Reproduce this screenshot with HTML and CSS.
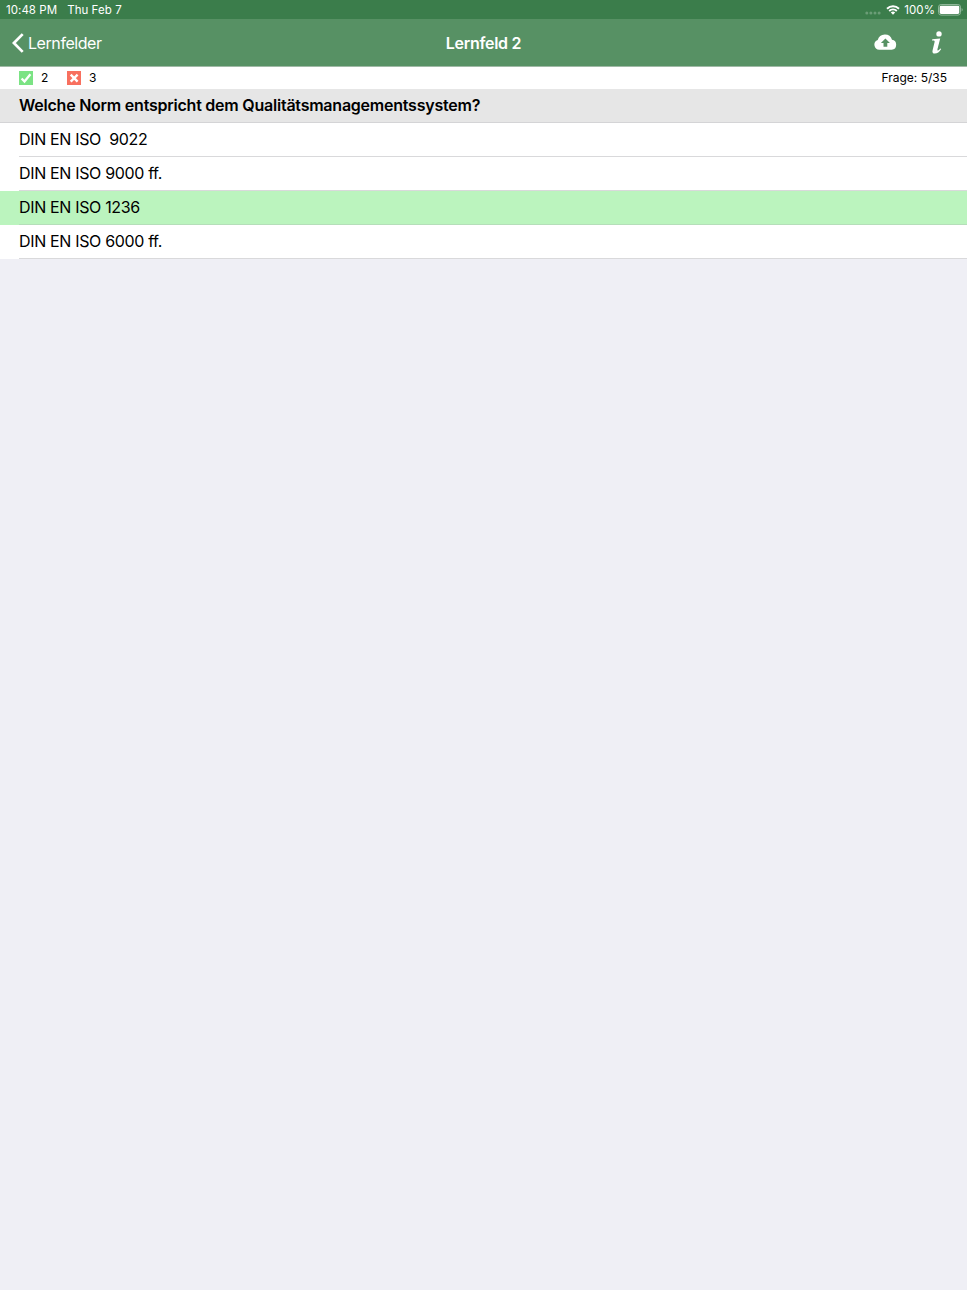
FILE: index.html
```html
<!DOCTYPE html>
<html lang="de">
<head>
    <meta charset="utf-8">
    <meta name="viewport" content="width=device-width, initial-scale=1">
    <title>Lernfeld 2</title>
    <link rel="stylesheet" href="styles.css">
</head>
<body>
    <div class="status-bar">
        <span class="time">10:48 PM</span>
        <span class="date">Thu Feb 7</span>
        <div class="status-icons">
            <svg class="signal" width="16" height="4" viewBox="0 0 16 4">
                <circle cx="1.8" cy="2" r="1.5"/>
                <circle cx="5.9" cy="2" r="1.5"/>
                <circle cx="10" cy="2" r="1.5"/>
                <circle cx="14.1" cy="2" r="1.5"/>
            </svg>
            <svg class="wifi" width="14" height="10" viewBox="0 0 14 10">
                <path d="M1 3.7a8.7 8.7 0 0 1 12 0M3.2 6a5.6 5.6 0 0 1 7.6 0" fill="none" stroke="#fff" stroke-width="1.9"/>
                <path d="M7 9.8 4.8 7.6a3.2 3.2 0 0 1 4.4 0z" fill="#fff"/>
            </svg>
            <span class="percent">100%</span>
            <svg class="battery" width="25" height="12" viewBox="0 0 25 12">
                <rect x=".5" y=".5" width="22" height="10.6" rx="2.6" fill="none" stroke="#8fb799"/>
                <rect x="1.7" y="1.7" width="19.6" height="8.2" rx="1.4" fill="#fff"/>
                <path d="M23.6 4v3.6q1.1-.5 1.1-1.8T23.6 4z" fill="#8fb799"/>
            </svg>
        </div>
    </div>

    <div class="nav-bar">
        <div class="back">
            <svg width="12" height="20" viewBox="0 0 12 20">
                <path d="M10.7 1.1 1.9 10l8.8 8.9" fill="none" stroke="#fff" stroke-width="2.7"/>
            </svg>
            <span>Lernfelder</span>
        </div>
        <h1 class="title">Lernfeld 2</h1>
        <div class="actions">
            <svg class="cloud" width="23" height="16" viewBox="0 0 23 16">
                <path fill="#fff" fill-rule="evenodd" d="M5.3 15.7A5 5 0 0 1 3.7 6 7.4 7.4 0 0 1 18 5.8a5 5 0 0 1-.3 9.9zM11.4 4.6 6.9 9.1h2.6v3.7h3.8V9.1h2.6z"/>
            </svg>
            <svg class="info" width="12" height="23" viewBox="0 0 12 23">
                <circle cx="8" cy="2.9" r="2.7" fill="#fff"/>
                <path fill="#fff" d="M1.3 8.2 9.2 7.6 6.5 18q-.4 1.6.4 1.6.9 0 2.4-2.1l.9.6Q7.500 22.600 3.800 22.600 .8 22.600 1.600 19.200L3.600 11.100Q4 9.500 2.900 9.500L1 9.500Z"/>
            </svg>
        </div>
    </div>

    <div class="score-bar">
        <svg width="14" height="14" viewBox="0 0 14 14">
            <rect width="14" height="14" fill="#7be384"/>
            <path d="m2.600 7.500 2.900 3L11.400 3.300" fill="none" stroke="#fff" stroke-width="2.300"/>
        </svg>
        <span class="count">2</span>
        <svg width="14" height="14" viewBox="0 0 14 14">
            <rect width="14" height="14" fill="#f8705f"/>
            <path d="m3.700 3.700 6.900 6.900M10.600 3.700l-6.900 6.900" fill="none" stroke="#fff" stroke-width="2.400"/>
        </svg>
        <span class="count">3</span>
        <span class="progress">Frage: 5/35</span>
    </div>

    <h2 class="question">Welche Norm entspricht dem Qualitätsmanagementssystem?</h2>
    <ul class="answers">
        <li><span>DIN EN ISO&nbsp; 9022</span></li>
        <li><span>DIN EN ISO 9000 ff.</span></li>
        <li class="correct"><span>DIN EN ISO 1236</span></li>
        <li><span>DIN EN ISO 6000 ff.</span></li>
    </ul>
</body>
</html>
```
FILE: styles.css
```css
* {
    box-sizing: border-box;
}

body {
    margin: 0;
    background-color: #efeff5;
    color: #000;
    font-family: Inter, "Liberation Sans", sans-serif;
}

svg {
    display: block;
    flex: none;
}

.status-bar {
    display: flex;
    align-items: center;
    height: 19px;
    padding: 0 4px 0 6px;
    background-color: #3b7d4b;
    color: white;
    font-size: 11.5px;
    letter-spacing: 0.05px;
}

.date {
    margin-left: 10px;
}

.status-icons {
    display: flex;
    align-items: center;
    margin-left: auto;
}

.signal {
    margin: 7px 5px 0 0;
    fill: #6b9d77;
}

.percent {
    margin: 0 3px 0 4px;
}

.nav-bar {
    display: grid;
    grid-template-columns: 1fr auto 1fr;
    align-items: center;
    height: 48px;
    padding: 0 24px 0 12px;
    background-color: #579164;
    border-bottom: 1px solid #a0b9a6;
    color: white;
    font-size: 16px;
    letter-spacing: -0.43px;
}

.back {
    display: flex;
    align-items: center;
    gap: 4px;
}

.title {
    margin: 0 0 0 12px;
    font-size: 16px;
    font-weight: 600;
    letter-spacing: -0.28px;
}

.actions {
    display: flex;
    align-items: center;
    justify-content: flex-end;
    gap: 34px;
}

.cloud {
    margin-top: -1px;
}

.score-bar {
    display: flex;
    align-items: center;
    height: 22px;
    padding: 0 20px 1px 19px;
    background-color: white;
    font-size: 12px;
}

.score-bar svg {
    margin-top: 1px;
}

.count {
    width: 26px;
    margin-left: 8px;
}

.progress {
    margin-left: auto;
}

.question {
    height: 34px;
    margin: 0;
    padding-left: 19px;
    background-color: #e6e6e6;
    border-bottom: 1px solid #d4d4d6;
    font-size: 16px;
    font-weight: 600;
    letter-spacing: -0.23px;
    line-height: 33px;
}

.answers {
    margin: 0;
    padding: 0;
    list-style: none;
    font-size: 16px;
    letter-spacing: -0.34px;
    line-height: 33px;
}

.answers li {
    height: 34px;
    padding-left: 19px;
    background-color: white;
}

.answers span {
    display: block;
    height: 34px;
    border-bottom: 1px solid #d9d9db;
}

.answers .correct {
    background-color: #bbf4be;
}

.answers .correct span {
    border-color: #b5deb9;
}
```
